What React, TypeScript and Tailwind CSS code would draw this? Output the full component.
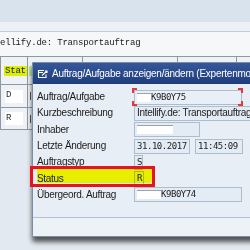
import React from 'react';

// SAP-style "Auftrag/Aufgabe" popup on top of a transport list, with
// a red frame + highlighter marking the Status row.

const sans = { fontFamily: '"Liberation Sans", Arial, sans-serif' };
const mono = { fontFamily: '"DejaVu Sans Mono", "Liberation Mono", monospace' };
const courier = { fontFamily: '"Liberation Mono", "Courier New", monospace' };

function Field({
  w,
  children,
  className = '',
  font = mono,
}: {
  w: string;
  children?: React.ReactNode;
  className?: string;
  font?: React.CSSProperties;
}) {
  return (
    <div
      style={font}
      className={`flex h-[15px] items-center overflow-hidden whitespace-nowrap border border-[#aebdcd] bg-[#e3ebf4] pl-[2px] text-[9px] leading-none tracking-[-0.45px] text-[#222] ${w} ${className}`}
    >
      {children}
    </div>
  );
}

function Redact({ w }: { w: string }) {
  return <span className={`inline-block h-[9px] border-t border-[#9aa4ae] bg-white ${w}`} />;
}

function Row({ label, children }: { label: string; children: React.ReactNode }) {
  return (
    <div className="flex h-[16.3px] items-center">
      <div className="w-[97px] shrink-0 text-[10px] leading-none tracking-[-0.3px] text-[#1c1c1c]">{label}</div>
      <div className="flex items-center gap-[5px]">{children}</div>
    </div>
  );
}

function Corner({ pos }: { pos: string }) {
  return <span className={`absolute h-[5px] w-[5px] border-[#e0393e] ${pos}`} />;
}

export default function App() {
  return (
    <div style={sans} className="relative h-[250px] w-[250px] overflow-hidden bg-[#e3e9f0]">
      {/* ---- top chrome ---- */}
      <div className="h-[22px] bg-[#d9e3ed]" />
      <div className="h-[10px] border-b border-[#c3ccd6] bg-[#edf1f5]" />
      <div className="flex h-[24px] items-center bg-[#f6f7f9]">
        <span style={courier} className="text-[9px] tracking-[-0.2px] text-[#202020]">
          ellify.de: Transportauftrag
        </span>
      </div>

      {/* ---- list table ---- */}
      <div className="border-t border-[#8e98a3] bg-[#eef2f6]">
        <div className="flex h-[28px] border-b border-[#8e98a3]">
          <div className="flex w-[28px] items-center border-x border-[#8e98a3] pl-[3px]">
            <span style={courier} className="bg-[#dcef00] px-[1px] text-[9px] leading-[10px] tracking-[-0.2px] text-[#202020]">
              Stat
            </span>
          </div>
          <div className="flex w-[55px] items-center border-r border-[#8e98a3] pl-[1px]">
            <span className="h-[10px] w-[4px] bg-[#bfe6a0]" />
          </div>
          <div className="w-[95px] border-r border-[#8e98a3]" />
          <div className="w-[59px] border-r border-[#8e98a3]" />
          <div className="flex-1" />
        </div>
        {['D', 'R'].map((v, i) => (
          <div key={v} className={`flex border-b border-[#8e98a3] ${i === 0 ? 'h-[23px]' : 'h-[22px]'}`}>
            <div className="flex w-[28px] items-center border-x border-[#8e98a3] px-[4px]">
              <span style={courier} className="flex h-[13px] w-full items-center bg-white pl-[1px] text-[9px] text-[#2a2a2a]">
                {v}
              </span>
            </div>
            <div className="flex w-[55px] items-center pl-[2px]">
              <span className="h-[8px] w-[1px] bg-[#555]" />
            </div>
          </div>
        ))}
      </div>

      {/* ---- dialog window ---- */}
      <div className="absolute left-[32px] top-[62px] flex h-[175px] w-[240px] flex-col rounded-b-[3px] border border-[#7b8da5] bg-[#e8eef5] shadow-[0_5px_5px_rgba(0,0,0,0.65)]">
        <div className="flex h-[21px] shrink-0 items-center gap-[4px] bg-gradient-to-b from-[#35579a] to-[#1f3d7c] pl-[4px]">
          <svg width="11" height="10" viewBox="0 0 11 10" fill="none" stroke="white" strokeWidth="1.1">
            <path d="M7 1.5H1.5v7H9V5.5" />
            <path d="M1.5 3.5H6" />
            <path d="M5 6.5L10 2M8 2h2v2" />
          </svg>
          <span className="whitespace-nowrap text-[10px] tracking-[-0.25px] text-white">
            Auftrag/Aufgabe anzeigen/ändern (Expertenmodus)
          </span>
        </div>

        <div className="flex flex-col pl-[4px] pt-[5px]">
          <Row label="Auftrag/Aufgabe">
            <div className="relative">
              <Field w="w-[108px]" className="bg-[#e8eff7]">
                <Redact w="w-[14px]" />
                K9B0Y75
              </Field>
              <Corner pos="-left-[2px] -top-[2px] border-l-2 border-t-2" />
              <Corner pos="-right-[1px] -top-[2px] border-r-2 border-t-2" />
              <Corner pos="-left-[2px] -bottom-[1px] border-b-2 border-l-2" />
              <Corner pos="-right-[1px] -bottom-[1px] border-b-2 border-r-2" />
            </div>
          </Row>
          <Row label="Kurzbeschreibung">
            <Field w="w-[130px]" font={sans} className="!text-[10px] !tracking-[-0.3px]">
              Intellify.de: Transportauftrag
            </Field>
          </Row>
          <Row label="Inhaber">
            <Field w="w-[66px]">
              <Redact w="w-[36px]" />
            </Field>
          </Row>
          <Row label="Letzte Änderung">
            <Field w="w-[56px]">31.10.2017</Field>
            <Field w="w-[48px]">11:45:09</Field>
          </Row>
          <Row label="Auftragstyp">
            <Field w="w-[9px]">S</Field>
          </Row>
          <Row label="Status">
            <Field w="w-[10px]">R</Field>
          </Row>
          <Row label="Übergeord. Auftrag">
            <Field w="w-[108px]">
              <Redact w="w-[24px]" />
              K9B0Y74
            </Field>
          </Row>
        </div>

        <div className="flex-1" />
        <div className="h-[19px] border-t border-[#b3c0cf] bg-[#edf2f7]" />
      </div>

      {/* ---- highlighter + red frame on Status row ---- */}
      <div className="absolute left-[37px] top-[169px] h-[14px] w-[115px] rounded-br-[3px] bg-[#f0f300] mix-blend-darken" />
      <div className="absolute left-[30px] top-[166px] h-[21px] w-[125px] border-[3px] border-[#e8131f]" />
    </div>
  );
}
